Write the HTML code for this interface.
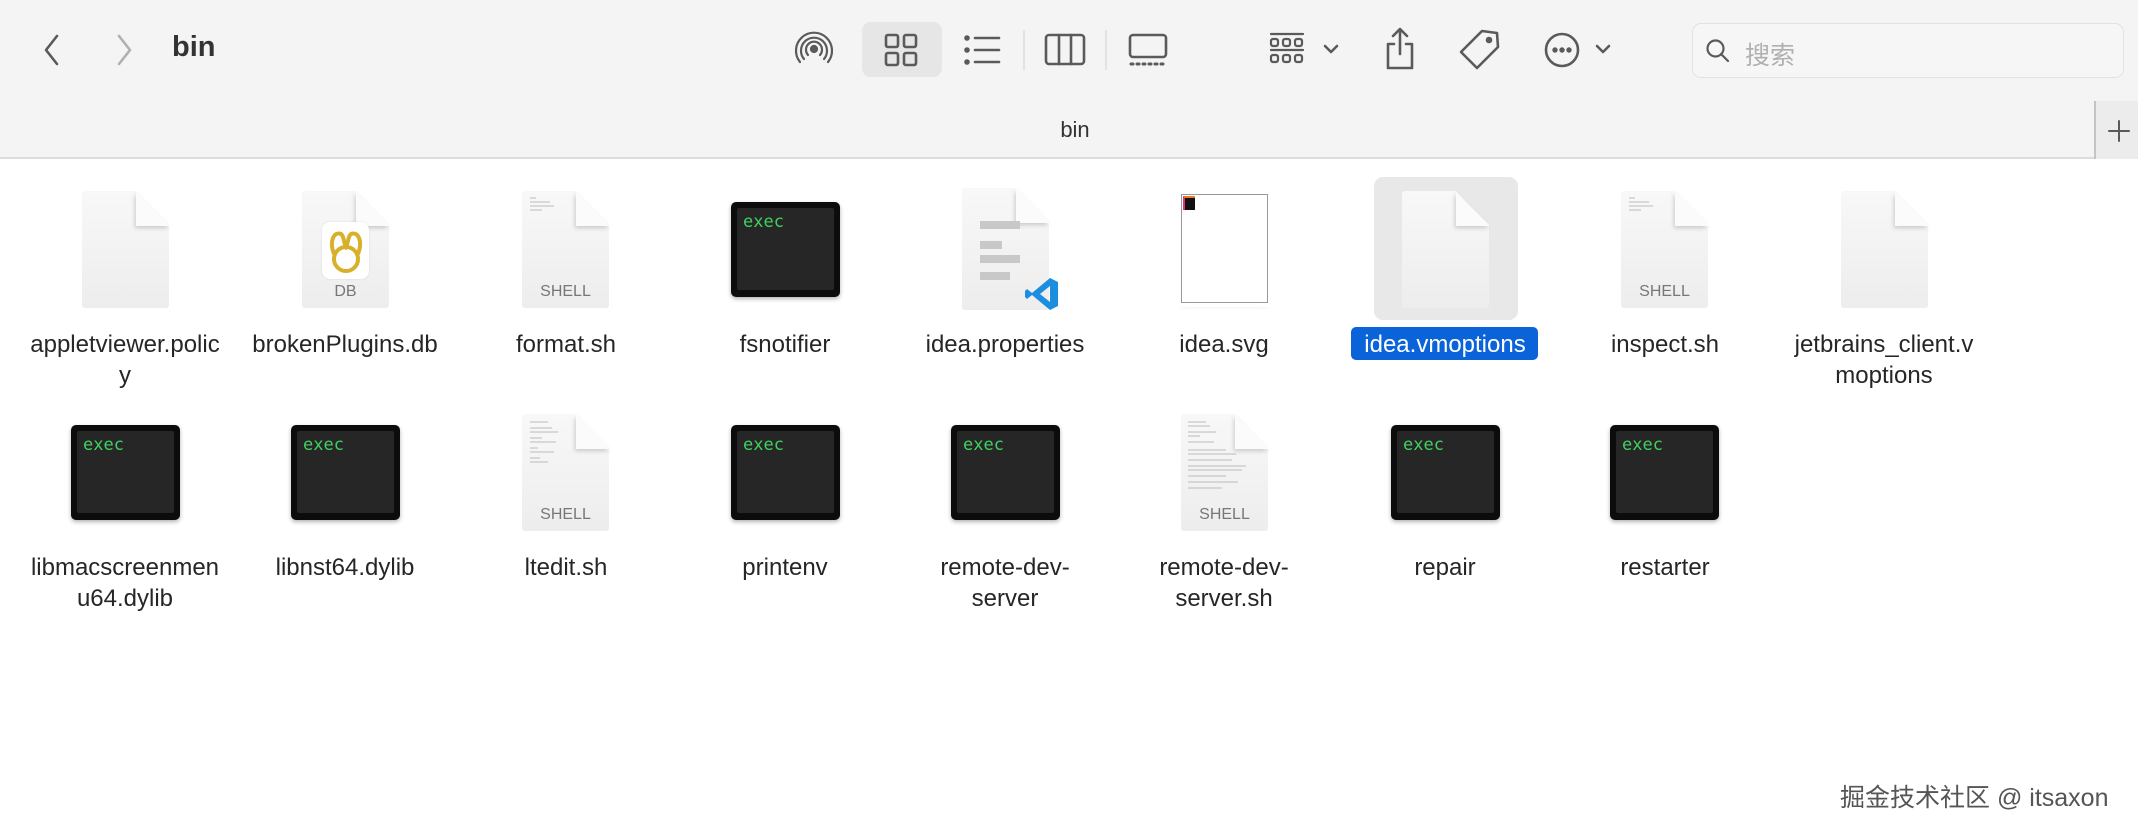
<!DOCTYPE html>
<html><head><meta charset="utf-8"><style>
*{margin:0;padding:0;box-sizing:border-box}
body{width:2138px;height:832px;background:#fff;position:relative;overflow:hidden;font-family:"Liberation Sans","Noto Sans CJK SC",sans-serif;color:#262626}
.top{position:absolute;left:0;top:0;width:2138px;height:159px;background:#f4f4f4;border-bottom:2px solid #dcdcdc}
.abs{position:absolute}
svg.i{position:absolute;fill:none;stroke:#5a5a5a;stroke-width:2.6;stroke-linecap:round;stroke-linejoin:round}
.lbl{position:absolute;width:240px;text-align:center;font-size:24px;line-height:31px;white-space:nowrap;color:#262626}
.doc{position:absolute;width:87px;height:117px;background:linear-gradient(180deg,#f8f8f8,#ededed);clip-path:polygon(0 0,62% 0,100% 30%,100% 100%,0 100%);border-radius:3px}
.fold{position:absolute;width:33px;height:35px;background:linear-gradient(225deg,transparent 50%,#fbfbfb 50%);filter:drop-shadow(-1px 2px 2px rgba(0,0,0,.18))}
.exec{position:absolute;width:109px;height:95px;background:#0c0c0c;border-radius:5px;box-shadow:0 2px 4px rgba(0,0,0,.3)}
.exec div{position:absolute;left:6px;top:6px;right:6px;bottom:7px;background:#262626;border-radius:2px;color:#3fd160;font-family:"DejaVu Sans Mono","Liberation Mono",monospace;font-size:17px;padding:4px 6px}
.sh{position:absolute;width:87px;text-align:center;font-size:16px;color:#777}
</style></head><body>
<div class="top"></div>
<svg class="i" style="left:40px;top:33px" width="24" height="34"><path d="M17 3 L6 17 L17 31"/></svg>
<svg class="i" style="left:112px;top:33px;stroke:#b0b0b0" width="24" height="34"><path d="M7 3 L18 17 L7 31"/></svg>
<div class="abs" style="left:172px;top:31px;font-size:29px;font-weight:bold;color:#333">bin</div>
<svg class="i" style="left:794px;top:29px;stroke-width:2.2" width="40" height="40"><circle cx="20" cy="20" r="3" fill="#5a5a5a"/><path d="M14 26a8 8 0 1 1 12 0M10 30a13 13 0 1 1 20 0M6 33a18 18 0 1 1 28 0"/></svg>
<div class="abs" style="left:862px;top:22px;width:80px;height:55px;background:#e6e6e6;border-radius:9px"></div>
<svg class="i" style="left:883px;top:32px" width="36" height="36"><rect x="3" y="3" width="12" height="12" rx="2"/><rect x="21" y="3" width="12" height="12" rx="2"/><rect x="3" y="21" width="12" height="12" rx="2"/><rect x="21" y="21" width="12" height="12" rx="2"/></svg>
<svg class="i" style="left:963px;top:33px" width="40" height="34"><circle cx="4" cy="5" r="1.5" fill="#5a5a5a"/><circle cx="4" cy="17" r="1.5" fill="#5a5a5a"/><circle cx="4" cy="29" r="1.5" fill="#5a5a5a"/><path d="M12 5H36M12 17H36M12 29H36"/></svg>
<div class="abs" style="left:1023px;top:30px;width:2px;height:40px;background:#e2e2e2"></div>
<svg class="i" style="left:1044px;top:32px" width="42" height="36"><rect x="2" y="3" width="38" height="29" rx="3"/><path d="M15 3V32M27 3V32"/></svg>
<div class="abs" style="left:1105px;top:30px;width:2px;height:40px;background:#e2e2e2"></div>
<svg class="i" style="left:1127px;top:32px" width="42" height="36"><rect x="3" y="3" width="36" height="22" rx="3"/><path d="M4 32h2M10 32h2M16 32h2M22 32h2M28 32h2M34 32h2" stroke-width="3"/></svg>
<svg class="i" style="left:1269px;top:30px;stroke-width:2.2" width="40" height="40"><path d="M2 4H34M2 20H34"/><rect x="2" y="9" width="7" height="7" rx="2"/><rect x="14" y="9" width="7" height="7" rx="2"/><rect x="26" y="9" width="7" height="7" rx="2"/><rect x="2" y="25" width="7" height="7" rx="2"/><rect x="14" y="25" width="7" height="7" rx="2"/><rect x="26" y="25" width="7" height="7" rx="2"/></svg>
<svg class="i" style="left:1323px;top:43px" width="16" height="12"><path d="M2 3L8 9L14 3"/></svg>
<svg class="i" style="left:1383px;top:26px" width="34" height="44"><path d="M11 18H5V42H29V18H23M17 3V28M10 10L17 3L24 10"/></svg>
<svg class="i" style="left:1458px;top:28px" width="42" height="42"><path d="M24 3L39 5L40 19L19 40L3 24Z"/><circle cx="31" cy="12" r="2" fill="#5a5a5a"/></svg>
<svg class="i" style="left:1543px;top:30px" width="40" height="40"><circle cx="19" cy="20" r="16"/><circle cx="12" cy="20" r="1.4" fill="#5a5a5a"/><circle cx="19" cy="20" r="1.4" fill="#5a5a5a"/><circle cx="26" cy="20" r="1.4" fill="#5a5a5a"/></svg>
<svg class="i" style="left:1595px;top:43px" width="16" height="12"><path d="M2 3L8 9L14 3"/></svg>
<div class="abs" style="left:1692px;top:23px;width:432px;height:55px;border:1px solid #e2e2e2;border-radius:9px;background:#f6f6f6"></div>
<svg class="i" style="left:1705px;top:38px;stroke-width:2.2" width="26" height="26"><circle cx="10.5" cy="10.5" r="8"/><path d="M16 16L23 23"/></svg>
<div class="abs" style="left:1745px;top:36px;font-size:25px;color:#b0b0b0">搜索</div>
<div class="abs" style="left:1040px;top:117px;width:70px;text-align:center;font-size:22px;color:#333">bin</div>
<div class="abs" style="left:2094px;top:101px;width:44px;height:58px;border-left:2px solid #c4c4c4;background:#ececec"></div>
<svg class="i" style="left:2106px;top:118px;stroke-width:2" width="26" height="26"><path d="M13 3V23M3 13H23"/></svg>

<div class="abs" style="left:1374px;top:177px;width:144px;height:143px;background:#e8e8e8;border-radius:9px"></div>
<div class="abs" style="left:1351px;top:327px;width:187px;height:33px;background:#0a63d8;border-radius:5px"></div>

<div class="doc" style="left:82px;top:191px"></div><div class="fold" style="left:136px;top:191px"></div>
<div class="doc" style="left:302px;top:191px"></div><div class="fold" style="left:356px;top:191px"></div>
<div class="abs" style="left:322px;top:222px;width:47px;height:57px;background:#fff;border-radius:8px;box-shadow:0 0 2px rgba(0,0,0,.1)"></div>
<svg class="abs" style="left:324px;top:226px" width="44" height="50"><g fill="none" stroke="#d8b02a" stroke-width="4"><circle cx="22" cy="33" r="12"/><path d="M10 28C5 15 10 5 17 8C20 10 20 18 22 21C24 18 24 10 27 8C34 5 39 15 34 28"/></g></svg>
<div class="sh" style="left:302px;top:283px">DB</div>
<div class="doc" style="left:522px;top:191px"></div><div class="fold" style="left:576px;top:191px"></div>
<svg class="abs" style="left:528px;top:196px" width="40" height="20"><g stroke="#bbb" stroke-width="1"><path d="M2 2H8M2 6H22M2 10H26M2 14H14"/></g></svg>
<div class="sh" style="left:522px;top:283px">SHELL</div>
<div class="exec" style="left:731px;top:202px"><div>exec</div></div>
<div class="doc" style="left:962px;top:188px;height:122px"></div><div class="fold" style="left:1016px;top:188px"></div>
<div class="abs" style="left:980px;top:221px;width:40px;height:8px;background:#c8c8c8"></div>
<div class="abs" style="left:980px;top:241px;width:22px;height:8px;background:#c8c8c8"></div>
<div class="abs" style="left:980px;top:255px;width:40px;height:8px;background:#c8c8c8"></div>
<div class="abs" style="left:980px;top:272px;width:30px;height:8px;background:#c8c8c8"></div>
<svg class="abs" style="left:1024px;top:276px" width="36" height="36"><path d="M26 2L34 6V30L26 34L8 19L3 23L1 21V15L3 13L8 17ZM26 10L16 18L26 26Z" fill="#1b8ee0"/></svg>
<div class="abs" style="left:1181px;top:194px;width:87px;height:109px;background:#fff;border:1px solid #999;box-shadow:0 0 0 4px #fff,0 2px 5px rgba(0,0,0,.2)"></div>
<div class="abs" style="left:1183px;top:196px;width:12px;height:14px;background:#111;border-left:2px solid #e0336f;border-top:2px solid #f07b26"></div>
<div class="doc" style="left:1402px;top:191px"></div><div class="fold" style="left:1456px;top:191px"></div>
<div class="doc" style="left:1621px;top:191px"></div><div class="fold" style="left:1675px;top:191px"></div>
<svg class="abs" style="left:1627px;top:196px" width="40" height="20"><g stroke="#bbb" stroke-width="1"><path d="M2 2H8M2 6H22M2 10H26M2 14H14"/></g></svg>
<div class="sh" style="left:1621px;top:283px">SHELL</div>
<div class="doc" style="left:1841px;top:191px"></div><div class="fold" style="left:1895px;top:191px"></div>

<div class="lbl" style="left:5px;top:329px">appletviewer.polic<br>y</div>
<div class="lbl" style="left:225px;top:329px">brokenPlugins.db</div>
<div class="lbl" style="left:446px;top:329px">format.sh</div>
<div class="lbl" style="left:665px;top:329px">fsnotifier</div>
<div class="lbl" style="left:885px;top:329px">idea.properties</div>
<div class="lbl" style="left:1104px;top:329px">idea.svg</div>
<div class="lbl" style="left:1325px;top:329px;color:#fff">idea.vmoptions</div>
<div class="lbl" style="left:1545px;top:329px">inspect.sh</div>
<div class="lbl" style="left:1764px;top:329px">jetbrains_client.v<br>moptions</div>

<div class="exec" style="left:71px;top:425px"><div>exec</div></div>
<div class="exec" style="left:291px;top:425px"><div>exec</div></div>
<div class="doc" style="left:522px;top:414px"></div><div class="fold" style="left:576px;top:414px"></div>
<svg class="abs" style="left:528px;top:420px" width="40" height="50"><g stroke="#bbb" stroke-width="1"><path d="M2 2H20M2 8H24M2 12H30M2 18H14M2 22H28M2 28H10M2 32H26M2 38H12M2 42H20"/></g></svg>
<div class="sh" style="left:522px;top:506px">SHELL</div>
<div class="exec" style="left:731px;top:425px"><div>exec</div></div>
<div class="exec" style="left:951px;top:425px"><div>exec</div></div>
<div class="doc" style="left:1181px;top:414px"></div><div class="fold" style="left:1235px;top:414px"></div>
<svg class="abs" style="left:1186px;top:420px" width="70" height="80"><g stroke="#bbb" stroke-width="1"><path d="M2 2H20M2 6H24M2 12H30M2 16H14M2 22H28M2 30H40M2 34H50M2 40H46M2 46H60M2 50H56M2 56H40M2 62H52M2 68H36"/></g></svg>
<div class="sh" style="left:1181px;top:506px">SHELL</div>
<div class="exec" style="left:1391px;top:425px"><div>exec</div></div>
<div class="exec" style="left:1610px;top:425px"><div>exec</div></div>

<div class="lbl" style="left:5px;top:552px">libmacscreenmen<br>u64.dylib</div>
<div class="lbl" style="left:225px;top:552px">libnst64.dylib</div>
<div class="lbl" style="left:446px;top:552px">ltedit.sh</div>
<div class="lbl" style="left:665px;top:552px">printenv</div>
<div class="lbl" style="left:885px;top:552px">remote-dev-<br>server</div>
<div class="lbl" style="left:1104px;top:552px">remote-dev-<br>server.sh</div>
<div class="lbl" style="left:1325px;top:552px">repair</div>
<div class="lbl" style="left:1545px;top:552px">restarter</div>

<div class="abs" style="left:1840px;top:778px;font-size:25px;color:#555;text-shadow:0 0 2px #fff">掘金技术社区 @ itsaxon</div>
</body></html>
